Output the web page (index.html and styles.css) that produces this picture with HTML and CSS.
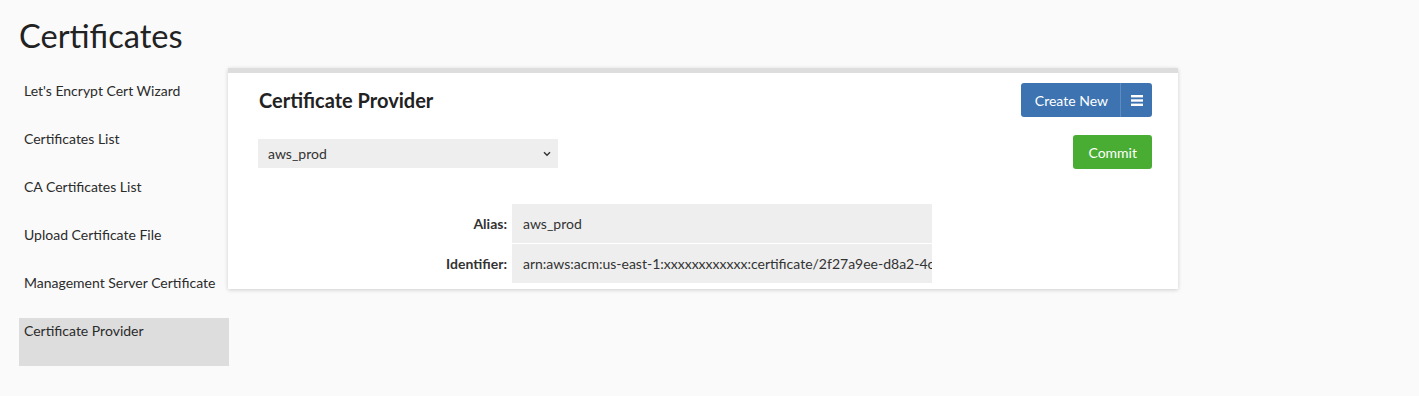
FILE: index.html
```html
<!DOCTYPE html>
<html>
<head>
<meta charset="utf-8">
<link rel="stylesheet" href="styles.css">
</head>
<body>
<h1 class="page-title">Certificates</h1>
<div class="layout">
  <nav class="sidebar">
    <a class="nav-item">Let's Encrypt Cert Wizard</a>
    <a class="nav-item">Certificates List</a>
    <a class="nav-item">CA Certificates List</a>
    <a class="nav-item">Upload Certificate File</a>
    <a class="nav-item">Management Server Certificate</a>
    <a class="nav-item active">Certificate Provider</a>
  </nav>
  <section class="panel">
    <div class="panel-head">
      <h2 class="panel-title">Certificate Provider</h2>
      <div class="btn-group">
        <button class="btn btn-blue btn-main">Create New</button>
        <button class="btn btn-blue btn-menu" aria-label="menu">
          <svg width="12" height="11" viewBox="0 0 12 11"><rect x="0" y="0" width="12" height="2.4" fill="#fff"/><rect x="0" y="4.3" width="12" height="2.4" fill="#fff"/><rect x="0" y="8.6" width="12" height="2.4" fill="#fff"/></svg>
        </button>
      </div>
    </div>
    <div class="panel-row">
      <div class="select-wrap">
        <select class="select"><option>aws_prod</option></select>
        <svg class="chevron" width="8" height="6" viewBox="0 0 8 6"><path d="M1 1.2 L4 4.2 L7 1.2" fill="none" stroke="#333" stroke-width="1.4"/></svg>
      </div>
      <button class="btn btn-green">Commit</button>
    </div>
    <div class="details">
      <div class="label">Alias:</div>
      <div class="value">aws_prod</div>
      <div class="label">Identifier:</div>
      <div class="value">arn:aws:acm:us-east-1:xxxxxxxxxxxx:certificate/2f27a9ee-d8a2-4c1b-9e3f-7a6b5c4d3e2f</div>
    </div>
  </section>
</div>
</body>
</html>
```
FILE: styles.css
```css
* { box-sizing: border-box; }
html, body { margin: 0; padding: 0; }
body {
  background: #fafafa;
  font-family: Lato, "Open Sans", sans-serif;
  color: #333;
  padding: 0 19px;
}
.page-title {
  margin: 17px 0 13px 0;
  font-size: 32.6px;
  font-weight: 400;
  line-height: 38px;
  color: #222;
}
.layout {
  display: flex;
  align-items: flex-start;
}
.sidebar {
  width: 209px;
  padding-top: 10px;
  display: flex;
  flex-direction: column;
  flex: none;
}
.nav-item {
  display: block;
  height: 48px;
  padding: 3px 5px;
  font-size: 14px;
  line-height: 20px;
  color: #2b2b2b;
  white-space: nowrap;
}
.nav-item.active {
  background: #ddd;
  width: 210px;
}
.panel {
  width: 950px;
  background: #fff;
  border-top: 5px solid #ddd;
  box-shadow: 0 1px 4px rgba(0,0,0,0.18);
  padding: 10px 26px 6px 30px;
  position: relative;
  z-index: 1;
}
.panel-head {
  display: flex;
  justify-content: space-between;
  align-items: center;
  height: 34px;
}
.panel-title {
  margin: 0 0 0 1px;
  font-size: 20px;
  font-weight: 700;
  color: #222;
}
.btn-group { display: flex; }
.btn {
  font-family: Lato, "Open Sans", sans-serif;
  font-size: 14px;
  color: #fff;
  border: none;
  height: 34px;
  border-radius: 3px;
  cursor: pointer;
}
.btn-blue { background: #3c73b0; }
.btn-main {
  padding: 0 12px 0 14px;
  border-radius: 3px 0 0 3px;
  border-right: 1px solid #5e8cc0;
}
.btn-menu {
  width: 31px;
  padding: 0;
  border-radius: 0 3px 3px 0;
  display: flex;
  align-items: center;
  justify-content: center;
}
.btn-green {
  background: #4aad33;
  padding: 0 15px;
}
.panel-row {
  margin-top: 18px;
  display: flex;
  justify-content: space-between;
  align-items: flex-start;
  height: 34px;
}
.select-wrap {
  position: relative;
  width: 300px;
  height: 29px;
  margin-top: 4px;
}
.select {
  -webkit-appearance: none;
  appearance: none;
  width: 100%;
  height: 29px;
  border: none;
  background: #eee;
  font-family: Lato, "Open Sans", sans-serif;
  font-size: 14px;
  color: #333;
  padding: 0 10px;
  outline: none;
}
.chevron {
  position: absolute;
  right: 7px;
  top: 12px;
  pointer-events: none;
}
.details {
  margin-top: 35px;
  display: grid;
  grid-template-columns: 252px 420px;
  column-gap: 2px;
  row-gap: 1px;
}
.label {
  height: 39px;
  display: flex;
  align-items: center;
  justify-content: flex-end;
  padding-right: 3px;
  font-size: 14px;
  font-weight: 700;
  color: #333;
}
.value {
  height: 39px;
  display: flex;
  align-items: center;
  background: #eee;
  padding-left: 11px;
  font-size: 14px;
  color: #333;
  white-space: nowrap;
  overflow: hidden;
}
```
